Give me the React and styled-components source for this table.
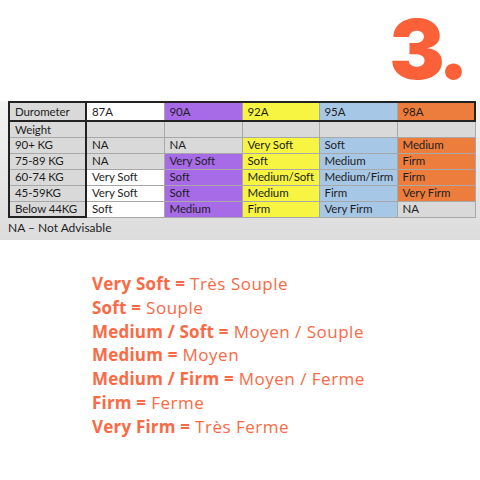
import React from 'react';
import styled, { createGlobalStyle } from 'styled-components';

const GlobalStyle = createGlobalStyle`
  html, body {
    margin: 0;
    padding: 0;
    background: #ffffff;
  }
  * { box-sizing: border-box; }
`;

const Page = styled.div`
  width: 480px;
  height: 480px;
  background: #ffffff;
  overflow: hidden;
  display: flex;
  flex-direction: column;
`;

const Header = styled.div`
  height: 101px;
  display: flex;
  justify-content: flex-end;
  align-items: flex-start;
  padding-right: 10px;
`;

const StepNumber = styled.div`
  font-family: Inter, "Liberation Sans", sans-serif;
  font-weight: 900;
  font-size: 83px;
  line-height: 1.2;
  letter-spacing: -5px;
  padding-right: 6px;
  color: #fb6139;
`;

const Band = styled.div`
  height: 139px;
  background: linear-gradient(#f4f4f4, #dcdcdc);
  padding: 0 6px 0 8px;
`;

const Table = styled.table`
  border-collapse: collapse;
  table-layout: fixed;
  width: 466px;
  font-family: Lato, "Liberation Sans", sans-serif;
  font-size: 11.5px;
  letter-spacing: -0.1px;
  color: #1e1e1e;
`;

const palette = {
  gray: '#d9d9d9',
  white: '#ffffff',
  purple: '#a86be8',
  yellow: '#f7f542',
  blue: '#a7c7e7',
  orange: '#ed7d3d',
};

const Cell = styled.td`
  height: ${p => (p.$head ? '19px' : '16px')};
  padding: 0 0 0 5px;
  background: ${p => palette[p.$tone] || palette.gray};
  border: 1px solid #a8a8a8;
  white-space: nowrap;
  line-height: 1;
  ${p => p.$head && 'border-top: 2px solid #222; border-bottom: 2px solid #222;'}
  ${p => p.$label && 'border-left: 2px solid #222; border-right: 2px solid #222;'}
  ${p => p.$last && 'border-bottom: 2px solid #222;'}
  ${p => p.$end && 'border-right: 2px solid #222;'}
`;

const Note = styled.div`
  font-family: Lato, "Liberation Sans", sans-serif;
  font-size: 12px;
  color: #1e1e1e;
  margin-top: 2px;
`;

const Legend = styled.div`
  padding: 32px 0 0 92px;
  display: flex;
  flex-direction: column;
`;

const LegendLine = styled.div`
  font-family: "Open Sans", sans-serif;
  font-size: 17px;
  line-height: 23.8px;
  letter-spacing: 0.5px;
  color: #fa6a45;
  white-space: nowrap;

  b {
    font-weight: 700;
    letter-spacing: 0.2px;
  }
`;

const grades = [
  { name: '87A', tone: 'white' },
  { name: '90A', tone: 'purple' },
  { name: '92A', tone: 'yellow' },
  { name: '95A', tone: 'blue' },
  { name: '98A', tone: 'orange' },
];

const rows = [
  { weight: '90+ KG', cells: [['NA', 'gray'], ['NA', 'gray'], ['Very Soft', 'yellow'], ['Soft', 'blue'], ['Medium', 'orange']] },
  { weight: '75-89 KG', cells: [['NA', 'gray'], ['Very Soft', 'purple'], ['Soft', 'yellow'], ['Medium', 'blue'], ['Firm', 'orange']] },
  { weight: '60-74 KG', cells: [['Very Soft', 'white'], ['Soft', 'purple'], ['Medium/Soft', 'yellow'], ['Medium/Firm', 'blue'], ['Firm', 'orange']] },
  { weight: '45-59KG', cells: [['Very Soft', 'white'], ['Soft', 'purple'], ['Medium', 'yellow'], ['Firm', 'blue'], ['Very Firm', 'orange']] },
  { weight: 'Below 44KG', cells: [['Soft', 'white'], ['Medium', 'purple'], ['Firm', 'yellow'], ['Very Firm', 'blue'], ['NA', 'gray']] },
];

const legend = [
  ['Very Soft =', 'Très Souple'],
  ['Soft =', 'Souple'],
  ['Medium / Soft =', 'Moyen / Souple'],
  ['Medium =', 'Moyen'],
  ['Medium / Firm =', 'Moyen / Ferme'],
  ['Firm =', 'Ferme'],
  ['Very Firm =', 'Très Ferme'],
];

const App = () => (
  <Page>
    <GlobalStyle />
    <Header>
      <StepNumber>3.</StepNumber>
    </Header>

    <Band>
      <Table>
        <colgroup>
          <col style={{ width: 77 }} />
          <col style={{ width: 78 }} />
          <col style={{ width: 78 }} />
          <col style={{ width: 77 }} />
          <col style={{ width: 78 }} />
          <col style={{ width: 78 }} />
        </colgroup>
        <tbody>
          <tr>
            <Cell $head $label $tone="gray">Durometer</Cell>
            {grades.map((g, i) => (
              <Cell key={g.name} $head $tone={g.tone} $end={i === grades.length - 1}>{g.name}</Cell>
            ))}
          </tr>
          <tr>
            <Cell $label $tone="gray">Weight</Cell>
            {grades.map(g => <Cell key={g.name} $tone="gray" />)}
          </tr>
          {rows.map((r, ri) => (
            <tr key={r.weight}>
              <Cell $label $last={ri === rows.length - 1} $tone="gray">{r.weight}</Cell>
              {r.cells.map(([text, tone], ci) => (
                <Cell key={ci} $tone={tone}>{text}</Cell>
              ))}
            </tr>
          ))}
        </tbody>
      </Table>
      <Note>NA – Not Advisable</Note>
    </Band>

    <Legend>
      {legend.map(([en, fr]) => (
        <LegendLine key={en}>
          <b>{en}</b> {fr}
        </LegendLine>
      ))}
    </Legend>
  </Page>
);

export default App;
